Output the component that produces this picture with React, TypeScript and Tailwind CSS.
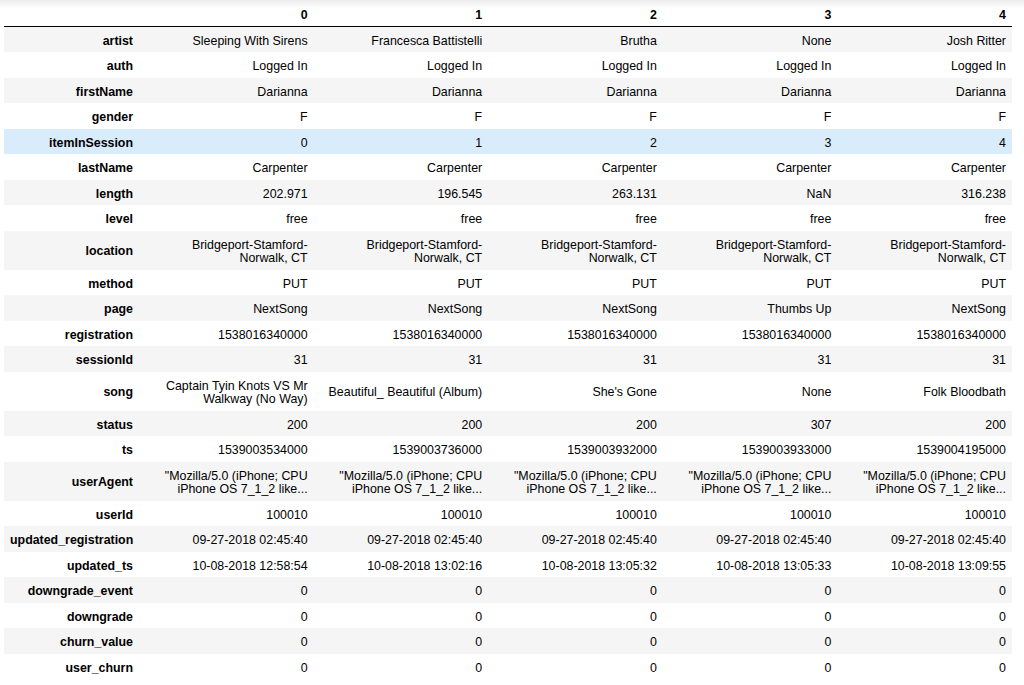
import * as React from 'react';

type Row = [string, string[]];

const same = (v: string): string[] => [v, v, v, v, v];

const rows: Row[] = [
  ['artist', ['Sleeping With Sirens', 'Francesca Battistelli', 'Brutha', 'None', 'Josh Ritter']],
  ['auth', same('Logged In')],
  ['firstName', same('Darianna')],
  ['gender', same('F')],
  ['itemInSession', ['0', '1', '2', '3', '4']],
  ['lastName', same('Carpenter')],
  ['length', ['202.971', '196.545', '263.131', 'NaN', '316.238']],
  ['level', same('free')],
  ['location', same('Bridgeport-Stamford-Norwalk, CT')],
  ['method', same('PUT')],
  ['page', ['NextSong', 'NextSong', 'NextSong', 'Thumbs Up', 'NextSong']],
  ['registration', same('1538016340000')],
  ['sessionId', same('31')],
  ['song', ['Captain Tyin Knots VS Mr Walkway (No Way)', 'Beautiful_ Beautiful (Album)', "She's Gone", 'None', 'Folk Bloodbath']],
  ['status', ['200', '200', '200', '307', '200']],
  ['ts', ['1539003534000', '1539003736000', '1539003932000', '1539003933000', '1539004195000']],
  ['userAgent', same('"Mozilla/5.0 (iPhone; CPU iPhone OS 7_1_2 like...')],
  ['userId', same('100010')],
  ['updated_registration', same('09-27-2018 02:45:40')],
  ['updated_ts', ['10-08-2018 12:58:54', '10-08-2018 13:02:16', '10-08-2018 13:05:32', '10-08-2018 13:05:33', '10-08-2018 13:09:55']],
  ['downgrade_event', same('0')],
  ['downgrade', same('0')],
  ['churn_value', same('0')],
  ['user_churn', same('0')],
];

// the row under the mouse in the notebook
const HOVER = 'itemInSession';

export default function App() {
  return (
    <div className="min-h-[685px] bg-white bg-[linear-gradient(to_bottom,#ebebeb,#ffffff_8px)] font-['Liberation_Sans',Arial,sans-serif] text-[12.4px] text-black">
      <table className="ml-[4px] w-[1008px] table-fixed border-collapse leading-[13.5px]">
        <colgroup>
          <col className="w-[135px]" />
          <col />
          <col />
          <col />
          <col />
          <col />
        </colgroup>
        <thead>
          <tr className="border-b border-black">
            <th className="px-[6px] pt-[9px] pb-[3px]" />
            {[0, 1, 2, 3, 4].map((c) => (
              <th key={c} className="px-[6px] pt-[9px] pb-[3px] text-right font-bold">
                {c}
              </th>
            ))}
          </tr>
        </thead>
        <tbody>
          {rows.map(([name, vals], i) => (
            <tr
              key={name}
              className={
                name === HOVER ? 'bg-[#d9ecfc]' : i % 2 === 0 ? 'bg-[#f5f5f5]' : 'bg-white'
              }
            >
              <th className="px-[6px] pt-[8px] pb-[4px] text-right align-middle font-bold">{name}</th>
              {vals.map((v, j) => (
                <td key={j} className="px-[6px] pt-[8px] pb-[4px] text-right align-middle">
                  {v}
                </td>
              ))}
            </tr>
          ))}
        </tbody>
      </table>
    </div>
  );
}
